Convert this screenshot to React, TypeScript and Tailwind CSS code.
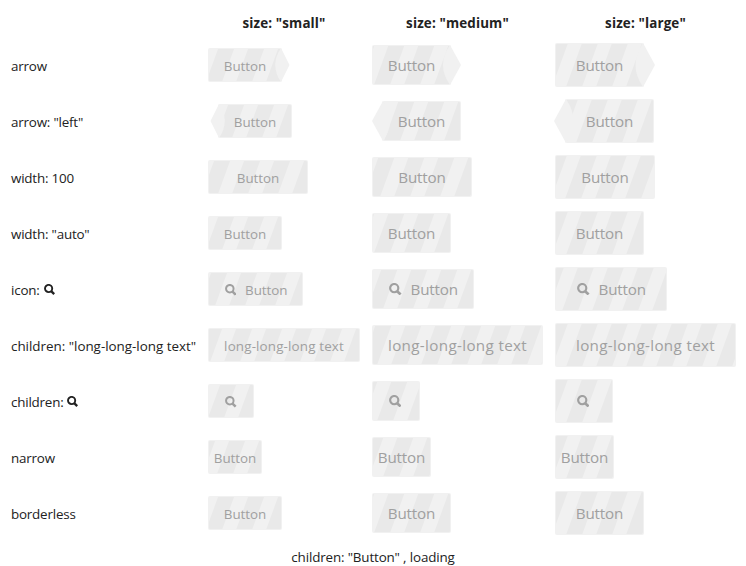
import { useId } from "react";
import type { ReactNode } from "react";

type Size = "small" | "medium" | "large";
type Arrow = "left" | "right";

const LIGHT = "#f1f1f1";
const DARK = "#e9e9e9";

const sizes: Record<
  Size,
  { box: string; text: string; long: string; pad: string; height: number; tip: number; icon: number }
> = {
  small: {
    box: "h-[34px]",
    text: "text-[13.4px] tracking-[-0.05px]",
    long: "tracking-[0.15px]",
    pad: "px-[16px]",
    height: 34,
    tip: 7.5,
    icon: 11.5,
  },
  medium: {
    box: "h-[40px]",
    text: "text-[15.2px] tracking-[-0.15px]",
    long: "tracking-[0.34px]",
    pad: "px-[16px]",
    height: 40,
    tip: 10,
    icon: 12.5,
  },
  large: {
    box: "h-[44px]",
    text: "text-[15.2px] tracking-[-0.15px]",
    long: "tracking-[0.34px]",
    pad: "px-[21px]",
    height: 44,
    tip: 11,
    icon: 12.5,
  },
};

function SearchIcon({ size }: { size: number }) {
  return (
    <svg width={size} height={size} viewBox="0 0 11 11" fill="none" stroke="currentColor" className="block shrink-0">
      <circle cx="4.6" cy="4.5" r="3.6" strokeWidth="1.9" />
      <path d="M7.2 7.2 10.2 10.1" strokeWidth="2.4" />
    </svg>
  );
}

interface ButtonProps {
  size: Size;
  width: number;
  phase: number;
  arrow?: Arrow;
  narrow?: boolean;
  children: ReactNode;
}

function LoadingButton({ size, width, phase, arrow, narrow, children }: ButtonProps) {
  const id = useId();
  const s = sizes[size];
  const h = s.height;
  const t = s.tip;
  const mid = h / 2;
  return (
    <div
      className={`relative flex items-center justify-center whitespace-nowrap text-[#a0a0a0] ${s.box} ${s.text} ${narrow ? "px-[6px]" : s.pad}`}
      style={{ width, marginLeft: arrow === "left" ? 10 : 0 }}
    >
      <svg className="absolute inset-0 overflow-visible" width={width} height={h}>
        <defs>
          <pattern
            id={id}
            width="30"
            height={h}
            patternUnits="userSpaceOnUse"
            patternTransform={`translate(${phase} ${h}) skewX(-20)`}
          >
            <rect width="30" height={h} fill={DARK} />
            <rect width="14" height={h} fill={LIGHT} />
          </pattern>
        </defs>
        <rect width={width} height={h} rx="2" fill={LIGHT} />
        <rect x="1" y="1" width={width - 2} height={h - 2} rx="1" fill={`url(#${id})`} />
        {arrow === "right" && (
          <path
            d={`M${width - 1} 0 L${width + t} ${mid} L${width - 1} ${h} Q${width - t - 5} ${mid} ${width - 1} 0Z`}
            fill={LIGHT}
          />
        )}
        {arrow === "left" && <path d={`M1 0 L${-t} ${mid} L1 ${h} Q${t + 5} ${mid} 1 0Z`} fill={LIGHT} />}
      </svg>
      <span className={`relative flex items-center ${size === "small" ? "top-px" : ""}`}>{children}</span>
    </div>
  );
}

interface Row {
  label: ReactNode;
  widths: [number, number, number];
  phases: [number, number, number];
  arrow?: Arrow;
  narrow?: boolean;
  content: "text" | "icon" | "iconText" | "long";
}

const rows: Row[] = [
  { label: "arrow", widths: [74, 79, 89], phases: [14, 18, 27], arrow: "right", content: "text" },
  { label: 'arrow: "left"', widths: [74, 79, 89], phases: [14, 18, 27], arrow: "left", content: "text" },
  { label: "width: 100", widths: [100, 100, 100], phases: [10, 8, 26], content: "text" },
  { label: 'width: "auto"', widths: [74, 79, 89], phases: [14, 18, 27], content: "text" },
  {
    label: (
      <>
        icon:&nbsp;
        <span className="pl-px">
          <SearchIcon size={11} />
        </span>
      </>
    ),
    widths: [95, 102, 112],
    phases: [7, 11, 23],
    content: "iconText",
  },
  {
    label: <span className="tracking-[-0.01px]">children: "long-long-long text"</span>,
    widths: [152, 171, 181],
    phases: [2, 5, 27],
    content: "long",
  },
  {
    label: (
      <>
        children:&nbsp;
        <SearchIcon size={11} />
      </>
    ),
    widths: [46, 48, 58],
    phases: [16, 21, 27],
    content: "icon",
  },
  { label: "narrow", widths: [54, 59, 59], phases: [25, 27, 27], narrow: true, content: "text" },
  { label: "borderless", widths: [74, 79, 89], phases: [14, 18, 27], content: "text" },
];

function content(kind: Row["content"], size: Size) {
  const icon = <SearchIcon size={sizes[size].icon} />;
  if (kind === "icon") return <span className={size === "small" ? "" : "-ml-[2px]"}>{icon}</span>;
  if (kind === "long") return <span className={sizes[size].long}>long-long-long text</span>;
  if (kind === "iconText")
    return (
      <span className="ml-px flex items-center gap-[9px]">
        {icon}
        <span>Button</span>
      </span>
    );
  return "Button";
}

const order: Size[] = ["small", "medium", "large"];

export default function App() {
  return (
    <main className="h-[566px] w-[746px] overflow-hidden bg-white pl-[11px] font-['Open_Sans','Noto_Sans',sans-serif] text-[13.4px] tracking-[-0.2px] text-[#222]">
      <div className="grid h-[37px] grid-cols-[185px_152px_171px_181px] items-center gap-x-3 pt-[9px] text-center font-bold tracking-[0.15px]">
        <span />
        {order.map((s) => (
          <span key={s}>{`size: "${s}"`}</span>
        ))}
      </div>
      {rows.map((row, i) => (
        <div key={i} className="grid h-14 grid-cols-[185px_152px_171px_181px] items-center gap-x-3">
          <div className="flex items-center whitespace-nowrap pt-[2px]">{row.label}</div>
          {order.map((s, j) => (
            <LoadingButton
              key={s}
              size={s}
              width={row.widths[j]}
              phase={row.phases[j]}
              arrow={row.arrow}
              narrow={row.narrow}
            >
              {content(row.content, s)}
            </LoadingButton>
          ))}
        </div>
      ))}
      <p className="-ml-[11px] mt-[6px] text-center leading-[20px] tracking-[-0.15px]">children: "Button" , loading</p>
    </main>
  );
}
